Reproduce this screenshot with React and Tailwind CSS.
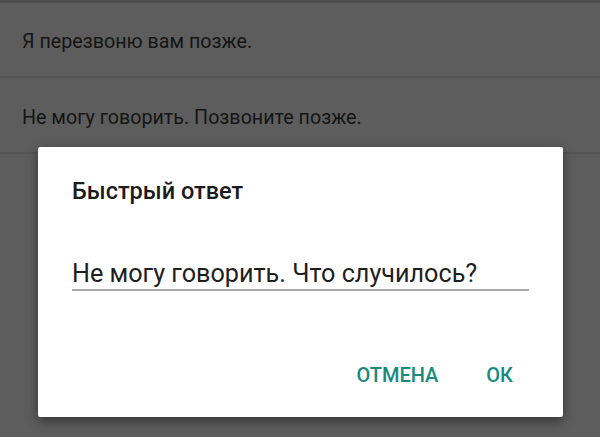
export default function App() {
  return (
    <div
      className="relative w-[600px] h-[437px] overflow-hidden bg-[#5d5d5d]"
      style={{ fontFamily: "Roboto, 'Noto Sans', sans-serif" }}
    >
      <div className="h-[3px] bg-[#4d4d4d]" />
      <div className="h-[75px] flex items-center pl-[22px] pt-[5px] border-b-2 border-[#545454] text-[19.7px] text-[#151515]">
        Я перезвоню вам позже.
      </div>
      <div className="h-[76px] flex items-center pl-[22px] pt-[5px] border-b-2 border-[#545454] text-[19.7px] text-[#151515]">
        Не могу говорить. Позвоните позже.
      </div>

      <div className="absolute left-[38px] top-[147px] w-[525px] h-[270px] bg-white rounded-[2px] shadow-[0_4px_12px_rgba(0,0,0,0.45)] flex flex-col">
        <div className="pl-[34px] pt-[29px] text-[23.5px] font-medium text-[#1b1b1b] leading-[30px]">
          Быстрый ответ
        </div>
        <div className="ml-[34px] mt-[54px] text-[25.2px] text-[#1e1e1e] leading-[28px] pb-[1px] border-b-2 border-[#a8a8a8] w-[457px]">
          Не могу говорить. Что случилось?
        </div>
        <div className="flex justify-end items-center gap-[48px] pr-[50px] mt-[72px] text-[20px] leading-[24px] font-medium text-[#198a7c]">
          <span>ОТМЕНА</span>
          <span>ОК</span>
        </div>
      </div>
    </div>
  );
}
